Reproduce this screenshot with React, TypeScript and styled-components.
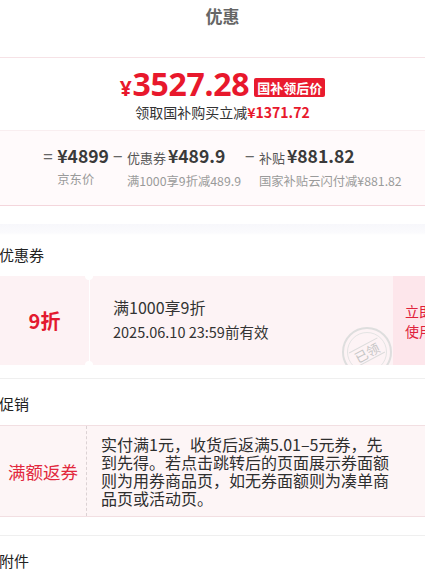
import React from "react";
import styled, { createGlobalStyle } from "styled-components";

const GlobalStyle = createGlobalStyle`
  html, body {
    margin: 0;
    padding: 0;
    background: #ffffff;
    overflow: hidden;
  }
  body {
    font-family: "Noto Sans CJK SC", "Noto Sans", sans-serif;
    color: #333333;
  }
`;

const Page = styled.div`
  width: 445px;
`;

const Header = styled.div`
  height: 57px;
  box-sizing: border-box;
  padding-top: 4px;
  text-align: center;
  font-size: 17px;
  line-height: 24px;
  font-weight: 700;
  color: #666666;
`;

const PriceCard = styled.div`
  border-top: 1px solid #f6e2e6;
  border-bottom: 1px solid #f4d6dc;
`;

const PriceTop = styled.div`
  padding: 12px 0 9px;
  display: flex;
  flex-direction: column;
  align-items: center;
  border-bottom: 1px solid #f9eef0;
`;

const PriceRow = styled.div`
  display: flex;
  align-items: center;
  gap: 5px;
  height: 32px;
  color: #e8182c;
  font-weight: 700;
`;

const Yuan = styled.span`
  font-size: 21px;
  margin-right: 1px;
`;

const BigPrice = styled.span`
  font-size: 32px;
  line-height: 32px;
  font-family: "Noto Sans", "Noto Sans CJK SC", sans-serif;
  letter-spacing: -0.3px;
`;

const Tag = styled.span`
  background: #e91b2e;
  color: #ffffff;
  font-size: 13px;
  line-height: 19px;
  padding: 0 3px;
  border-radius: 2px;
  margin-top: 2px;
`;

const SubLine = styled.div`
  margin-top: 1px;
  font-size: 14px;
  line-height: 18px;
  color: #333333;
`;

const RedStrong = styled.span`
  color: #e8182c;
  font-weight: 700;
`;

const Breakdown = styled.div`
  background: #fffafb;
  padding: 13px 0 14px;
  display: flex;
  justify-content: center;
  gap: 4px;
`;

const Part = styled.div`
  display: flex;
  align-items: flex-start;
`;

const Sign = styled.span`
  width: 14px;
  font-size: 17px;
  line-height: 24px;
  color: #666666;
`;

const PartBody = styled.div`
  display: flex;
  flex-direction: column;
`;

const MainLine = styled.div`
  display: flex;
  align-items: baseline;
  gap: 2px;
  line-height: 24px;
`;

const PartLabel = styled.span`
  font-size: 13px;
  color: #555555;
`;

const Amount = styled.span`
  font-size: 17.5px;
  font-weight: 600;
  color: #3a3a3a;
`;

const Note = styled.div`
  font-size: 12.3px;
  line-height: 20px;
  color: #9a9a9a;
  margin-top: 1px;
`;

const Gap = styled.div`
  height: 18px;
`;

const Section = styled.div<{ $padBottom: number; $first?: boolean }>`
  padding: ${(p) => (p.$first ? "20px" : "14px")} 0 ${(p) => p.$padBottom}px;
  border-bottom: 1px solid #efefef;
  background: ${(p) =>
    p.$first ? "linear-gradient(#f7f7fb 0px, #fbfbfd 9px, #ffffff 11px)" : "#ffffff"};
`;

const Heading = styled.div`
  font-size: 15px;
  line-height: 22px;
  color: #222222;
  margin-left: -1px;
  margin-bottom: 10px;
`;

const Coupon = styled.div`
  display: grid;
  grid-template-columns: 89px 1fr 52px;
  height: 89px;
`;

const CouponLeft = styled.div`
  background: #fdf2f4;
  display: flex;
  align-items: center;
  justify-content: center;
  font-size: 20px;
  font-weight: 700;
  color: #e3192f;
  position: relative;
  &::before,
  &::after {
    content: "";
    position: absolute;
    right: -4px;
    width: 8px;
    height: 8px;
    border-radius: 50%;
    background: #ffffff;
    z-index: 1;
  }
  &::before {
    top: -4px;
  }
  &::after {
    bottom: -4px;
  }
`;

const CouponMid = styled.div`
  background: #fdf3f5;
  margin-left: 1px;
  padding: 19px 0 0 23px;
  position: relative;
  overflow: hidden;
`;

const CouponTitle = styled.div`
  font-size: 16px;
  line-height: 24px;
  color: #333333;
`;

const CouponDate = styled.div`
  font-size: 14.5px;
  line-height: 24px;
  color: #333333;
  margin-top: 1px;
`;

const Stamp = styled.div`
  position: absolute;
  right: 1px;
  bottom: -12px;
  width: 50px;
  height: 50px;
  border-radius: 50%;
  border: 2px solid #dedede;
  box-sizing: border-box;
  display: flex;
  align-items: center;
  justify-content: center;
  &::before {
    content: "";
    position: absolute;
    inset: 3px;
    border-radius: 50%;
    border: 1px solid #e4e4e4;
  }
`;

const StampText = styled.span`
  font-size: 13px;
  color: #c6c6c6;
  transform: rotate(-28deg);
  border-top: 1px solid #dcdcdc;
  border-bottom: 1px solid #dcdcdc;
  padding: 0 3px;
  line-height: 15px;
  background: #fdf3f5;
  position: relative;
`;

const CouponAction = styled.div`
  background: #fde6eb;
  padding: 25px 0 0 12px;
  font-size: 14px;
  line-height: 20px;
  color: #e0213a;
`;

const Promo = styled.div`
  display: grid;
  grid-template-columns: 87px 1fr;
  background: #fdf5f6;
  border-top: 1px solid #f2dfe2;
  border-bottom: 1px solid #f2dfe2;
`;

const PromoName = styled.div`
  display: flex;
  align-items: center;
  justify-content: center;
  border-right: 1px dashed #dcd2d4;
  font-size: 17.5px;
  color: #e2283d;
`;

const PromoText = styled.div`
  padding: 9px 50px 9px 14px;
  font-size: 16px;
  line-height: 18px;
  color: #2e2e2e;
`;

export default function App() {
  return (
    <Page>
      <GlobalStyle />
      <Header>优惠</Header>

      <PriceCard>
        <PriceTop>
          <PriceRow>
            <BigPrice>
              <Yuan>¥</Yuan>3527.28
            </BigPrice>
            <Tag>国补领后价</Tag>
          </PriceRow>
          <SubLine>
            领取国补购买立减<RedStrong>¥1371.72</RedStrong>
          </SubLine>
        </PriceTop>
        <Breakdown>
          <Part>
            <Sign>=</Sign>
            <PartBody>
              <MainLine>
                <Amount>¥4899</Amount>
              </MainLine>
              <Note>京东价</Note>
            </PartBody>
          </Part>
          <Part>
            <Sign>−</Sign>
            <PartBody>
              <MainLine>
                <PartLabel>优惠券</PartLabel>
                <Amount>¥489.9</Amount>
              </MainLine>
              <Note>满1000享9折减489.9</Note>
            </PartBody>
          </Part>
          <Part>
            <Sign>−</Sign>
            <PartBody>
              <MainLine>
                <PartLabel>补贴</PartLabel>
                <Amount>¥881.82</Amount>
              </MainLine>
              <Note>国家补贴云闪付减¥881.82</Note>
            </PartBody>
          </Part>
        </Breakdown>
      </PriceCard>

      <Gap />

      <Section $first $padBottom={13}>
        <Heading>优惠券</Heading>
        <Coupon>
          <CouponLeft>9折</CouponLeft>
          <CouponMid>
            <CouponTitle>满1000享9折</CouponTitle>
            <CouponDate>2025.06.10 23:59前有效</CouponDate>
            <Stamp>
              <StampText>已领</StampText>
            </Stamp>
          </CouponMid>
          <CouponAction>
            立即
            <br />
            使用
          </CouponAction>
        </Coupon>
      </Section>

      <Section $padBottom={18}>
        <Heading>促销</Heading>
        <Promo>
          <PromoName>满额返券</PromoName>
          <PromoText>
            实付满1元，收货后返满5.01–5元券，先到先得。若点击跳转后的页面展示券面额则为用券商品页，如无券面额则为凑单商品页或活动页。
          </PromoText>
        </Promo>
      </Section>

      <Section $padBottom={14}>
        <Heading>附件</Heading>
      </Section>
    </Page>
  );
}
